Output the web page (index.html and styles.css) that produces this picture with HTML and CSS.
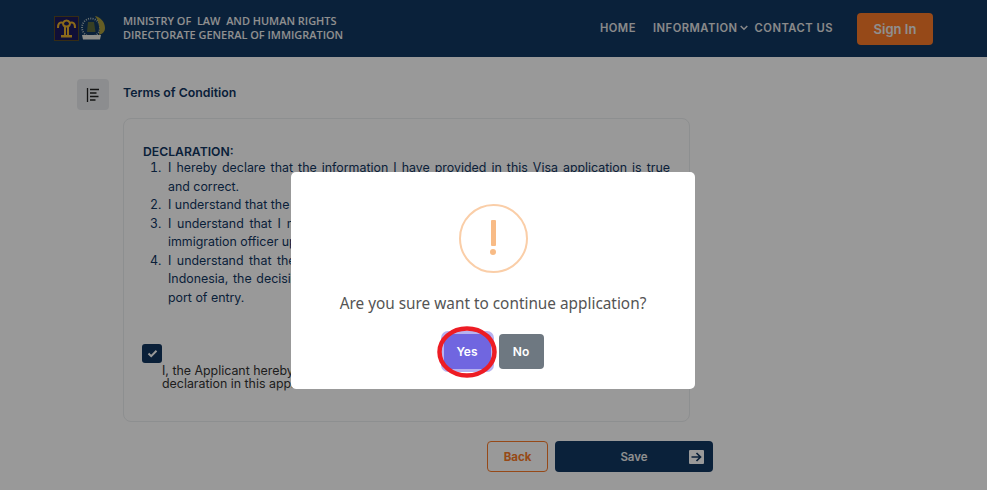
FILE: index.html
```html
<!DOCTYPE html>
<html>
	<head>
		<title>Terms of Condition</title>
		<meta charset="utf-8">
		<link rel="stylesheet" href="styles.css">
	</head>
	<body>
		<header class="topbar">
			<div class="brand">
				<svg class="logos" width="52" height="25" viewBox="0 0 52 25">
					<rect x="0.5" y="0.5" width="24" height="24" fill="#1b1a5c" stroke="#5a4a22"/>
					<path d="M12.500 4.500c-2 0-3 1.500-3.500 2.500-1-.8-3-.8-4 .5-1 1.200-1 3-1 4.500M12.500 4.500c2 0 3 1.500 3.500 2.500 1-.8 3-.8 4 .5 1 1.200 1 3 1 4.500M9 7c0 2 1.500 3.500 3.500 3.500S16 9 16 7" fill="none" stroke="#e8b02c" stroke-width="2"/>
					<path d="M10 10h2v9.500h-2zM13 10h2v9.500h-2zM7 19h11v2.500H7z" fill="#e8b02c"/>
					<circle cx="37" cy="11.500" r="9" fill="none" stroke="#b4c2c1" stroke-width="1.800" stroke-dasharray="1 1.300"/>
					<path d="M41 0c5.500 1 10 6 10 12 0 4-3 6-6 7 1-4 1-13-4-19z" fill="#a89c3c"/>
					<path d="M34 6h6l1.500 10H33z" fill="#5c6a3c"/>
					<path d="M28 19h19l-1 4.500H29z" fill="#ecece4"/>
				</svg>
				<div class="brand-text">MINISTRY OF&nbsp; LAW&nbsp; AND HUMAN RIGHTS<br>DIRECTORATE GENERAL OF IMMIGRATION</div>
			</div>
			<nav class="nav">
				<a class="nav-link">HOME</a>
				<a class="nav-link nav-drop">INFORMATION<svg width="8" height="6" viewBox="0 0 8 6"><path d="M.7 1 4 4.300 7.300 1" fill="none" stroke="#e6e6e6" stroke-width="1.500"/></svg></a>
				<a class="nav-link nav-contact">CONTACT US</a>
				<button class="signin">Sign In</button>
			</nav>
		</header>

		<main class="content">
			<div class="side-icon">
				<svg width="14" height="14" viewBox="0 0 14 14"><path d="M1.500 0v14M4 1.500h9M4 5h6.500M4 8.500h8.500M4 12h5.500" fill="none" stroke="#222" stroke-width="1.300"/></svg>
			</div>
			<div class="form-col">
				<h1 class="form-title">Terms of Condition</h1>
				<section class="card">
					<div class="decl-head">DECLARATION:</div>
					<ol class="decl-list">
						<li>I hereby declare that the information I have provided in this Visa application is true and correct.</li>
						<li>I understand that the approval of this application does not guarantee entry.</li>
						<li>I understand that I may be asked to present the original documents to any of the immigration officer upon arrival at the port of entry.</li>
						<li>I understand that the decision to grant entry rests with the officer at the arrival in Indonesia, the decision of the immigration officer on duty is final and binding at the port of entry.</li>
					</ol>
					<div class="check">
						<svg width="11" height="9" viewBox="0 0 11 9"><path d="M1.500 4.500 4.200 7.200 9.500 1.800" fill="none" stroke="#fff" stroke-width="2"/></svg>
					</div>
					<p class="agree">I, the Applicant hereby state that I have read and understood the<br>declaration in this application form.</p>
				</section>
				<div class="actions">
					<button class="btn-back">Back</button>
					<button class="btn-save">Save
						<svg class="save-arrow" width="15" height="14" viewBox="0 0 15 14"><rect width="15" height="14" rx="1" fill="#fff"/><path d="M2.500 7h9M7.500 3l4 4-4 4" fill="none" stroke="#11365f" stroke-width="1.700"/></svg>
					</button>
				</div>
			</div>
		</main>

		<div class="overlay">
			<div class="modal">
				<div class="warn-icon">
					<span class="warn-bar"></span>
					<span class="warn-dot"></span>
				</div>
				<h2 class="modal-title">Are you sure want to continue application?</h2>
				<div class="modal-actions">
					<div class="yes-wrap">
						<button class="btn-yes">Yes</button>
						<svg class="red-ring" width="60" height="52" viewBox="0 0 60 52"><ellipse cx="30" cy="26" rx="27.500" ry="23.500" fill="none" stroke="#ed1c24" stroke-width="4.500"/></svg>
					</div>
					<button class="btn-no">No</button>
				</div>
			</div>
		</div>
	</body>
</html>
```

FILE: styles.css
```css
*
{
	box-sizing: border-box;
}
body{
	margin: 0;
	height: 490px;
	overflow: hidden;
	background: #fff;
	font-family: Inter, "Liberation Sans", sans-serif;
	color: #11365f;
}
button{
	font-family: inherit;
	border: 0;
	cursor: pointer;
}

/* top bar */
.topbar{
	height: 57px;
	padding: 0 54px;
	display: flex;
	align-items: center;
	justify-content: space-between;
	background: #113762;
}
.brand{
	display: flex;
	align-items: center;
	gap: 17px;
}
.logos{
	display: block;
}
.brand-text{
	margin-bottom: 2px;
	font-family: "Open Sans", sans-serif;
	font-size: 10.950px;
	font-weight: 600;
	line-height: 14px;
	color: #f0f0f0;
}
.nav{
	display: flex;
	align-items: center;
}
.nav-link{
	display: flex;
	align-items: center;
	margin: 0 17px 2px 0;
	font-size: 11.200px;
	font-weight: 600;
	letter-spacing: .5px;
	color: #e6e6e6;
}
.nav-drop{
	gap: 2px;
	margin-right: 7px;
}
.nav-contact{
	margin-right: 24px;
}
.signin{
	width: 76px;
	height: 32px;
	border-radius: 4px;
	background: #fb7b28;
	color: #eee;
	font-size: 13px;
	font-weight: 600;
}

/* form */
.content{
	display: flex;
	gap: 14px;
	padding: 22px 0 0 77px;
}
.side-icon{
	width: 32px;
	height: 31px;
	border-radius: 4px;
	background: #e9ecef;
	display: flex;
	align-items: center;
	justify-content: center;
}
.form-col{
	width: 590px;
}
.form-title{
	margin: 6px 0 18px;
	font-size: 12.300px;
	font-weight: 600;
	line-height: 15px;
}
.card{
	width: 567px;
	height: 304px;
	padding: 25px 19px 0;
	border: 1px solid #eceef0;
	border-radius: 8px;
}
.decl-head{
	font-size: 12.200px;
	font-weight: 600;
	line-height: 15px;
}
.decl-list{
	margin: 0;
	padding: 0 0 0 25px;
	font-size: 12.400px;
	line-height: 18.500px;
	text-align: justify;
}
.decl-list li::marker{
	content: counter(list-item) ".\00a0\00a0";
}
.check{
	margin: 37px 0 0 -1px;
	width: 20px;
	height: 19px;
	border-radius: 3px;
	background: #11365f;
	display: flex;
	align-items: center;
	justify-content: center;
}
.agree{
	margin: 1px 0 0 19px;
	font-size: 12.400px;
	line-height: 13px;
	color: #333;
}
.actions{
	display: flex;
	justify-content: flex-end;
	gap: 7px;
	margin-top: 19px;
}
.btn-back{
	width: 61px;
	height: 31px;
	border: 1px solid #fb7b28;
	border-radius: 4px;
	background: #fff;
	color: #fb7b28;
	font-size: 11.500px;
	font-weight: 700;
}
.btn-save{
	position: relative;
	width: 158px;
	height: 31px;
	border-radius: 4px;
	background: #113762;
	color: #eee;
	font-size: 11.500px;
	font-weight: 600;
}
.save-arrow{
	position: absolute;
	right: 9px;
	top: 9px;
}

/* dialog */
.overlay{
	position: fixed;
	inset: 0;
	background: rgba(0,0,0,.4);
	display: flex;
	justify-content: center;
	align-items: flex-start;
	padding: 172px 1px 0 0;
}
.modal{
	width: 404px;
	height: 217px;
	padding-top: 32px;
	border-radius: 5px;
	background: #fff;
	display: flex;
	flex-direction: column;
	align-items: center;
}
.warn-icon{
	width: 69px;
	height: 69px;
	border: 2.600px solid #facea8;
	border-radius: 50%;
	display: flex;
	flex-direction: column;
	align-items: center;
	padding-top: 14px;
}
.warn-bar{
	width: 5px;
	height: 26px;
	border-radius: 1px;
	background: #f8bb86;
}
.warn-dot{
	margin-top: 3px;
	width: 6px;
	height: 6px;
	border-radius: 50%;
	background: #f8bb86;
}
.modal-title{
	margin: 17px 0 0;
	font-family: "Noto Sans", sans-serif;
	font-size: 15.350px;
	font-weight: 400;
	line-height: 26px;
	color: #545454;
}
.modal-actions{
	margin: 18px 2px 0 0;
	display: flex;
	gap: 8px;
}
.yes-wrap{
	position: relative;
}
.btn-yes{
	display: block;
	width: 47px;
	height: 35px;
	margin-left: 3px;
	border-radius: 4px;
	background: #7066e0;
	box-shadow: 0 0 0 3px rgba(112,102,224,.5);
	color: #fff;
	font-size: 12px;
	font-weight: 600;
}
.red-ring{
	position: absolute;
	left: -4px;
	top: -8px;
}
.btn-no{
	width: 45px;
	height: 35px;
	border-radius: 4px;
	background: #6e7881;
	color: #fff;
	font-size: 12px;
	font-weight: 600;
}
```
